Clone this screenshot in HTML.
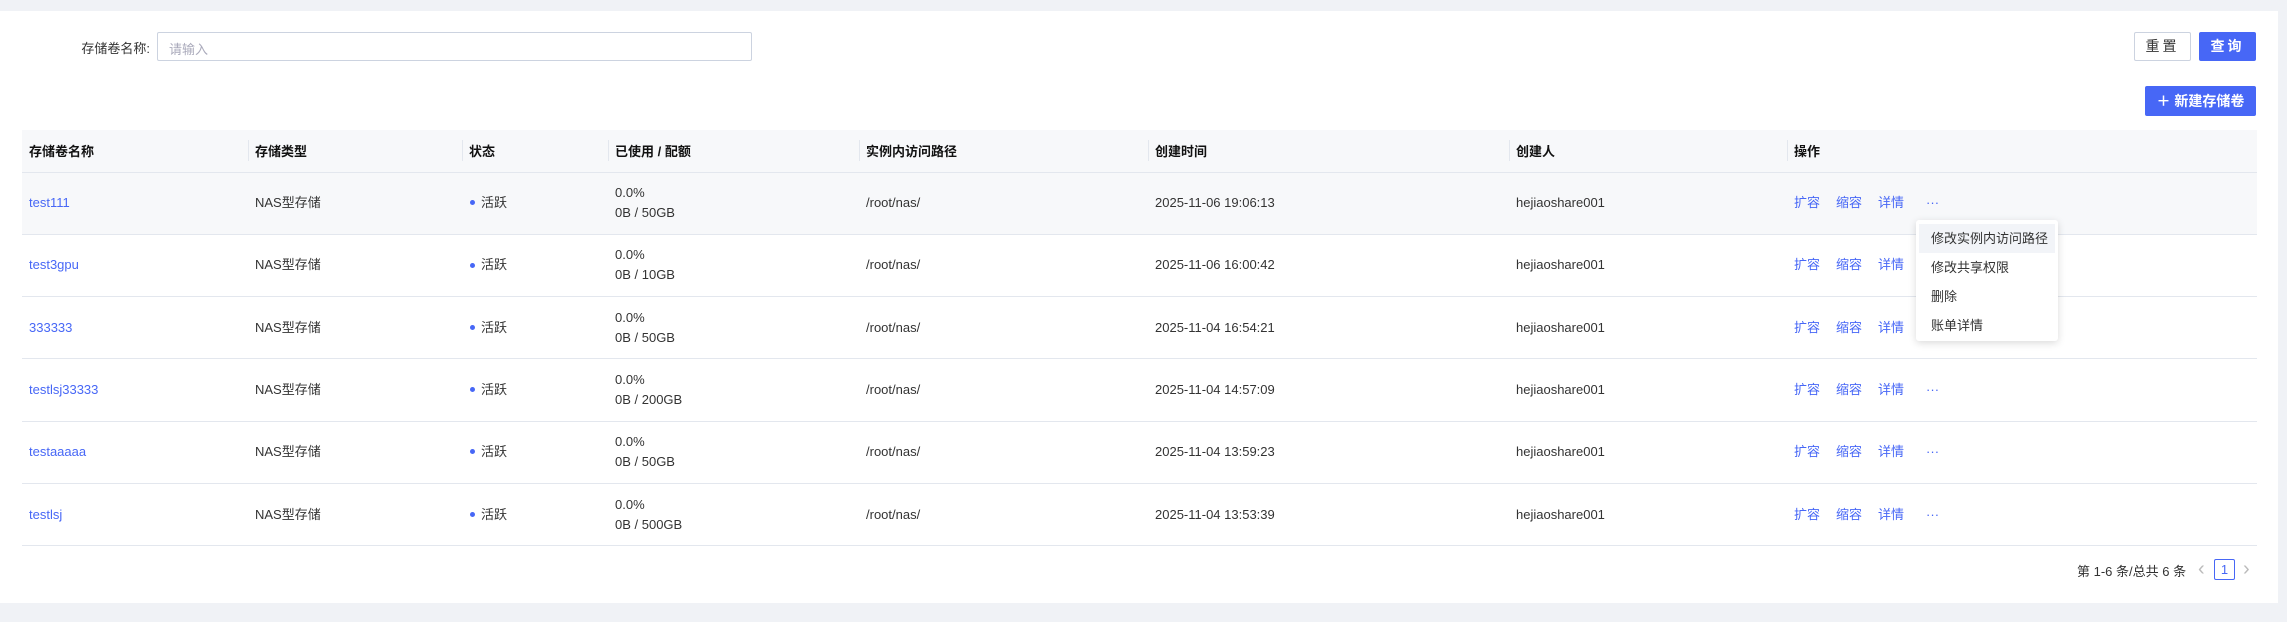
<!DOCTYPE html>
<html><head><meta charset="utf-8"><style>
*{box-sizing:border-box;margin:0;padding:0}
body{width:2287px;height:622px;background:#f0f2f6;font-family:"Liberation Sans","Noto Sans CJK SC",sans-serif;font-size:13px;color:#333;position:relative;overflow:hidden}
.card{position:absolute;left:0;top:11px;width:2278px;height:592px;background:#fff}
.abs{position:absolute}
.lbl{left:80px;top:38px;font-size:13px;color:#333;width:70px;text-align:right}
.inp{left:157px;top:32px;width:595px;height:29px;border:1px solid #ccd3e0;border-radius:2px;font-size:13px;color:#aab;padding:6px 11px}
.btn{height:29px;border-radius:2px;font-size:14px;text-align:center;line-height:27px}
.reset{left:2134px;top:32px;width:57px;border:1px solid #ccd3e0;color:#333;letter-spacing:3px}
.query{left:2199px;top:32px;width:57px;background:#4767f6;color:#fff;border:1px solid #4767f6;letter-spacing:3px;font-weight:bold}
.newb{left:2145px;top:86px;width:111px;height:30px;background:#4767f6;color:#fff;font-weight:bold;line-height:30px}
table{position:absolute;left:22px;top:130px;width:2235px;border-collapse:collapse;table-layout:fixed}
th{height:42px;background:#f7f8fa;text-align:left;font-weight:bold;padding-left:7px;position:relative;border-bottom:1px solid #e3e7ee;color:#111}
th+th:before{content:"";position:absolute;left:0;top:10px;height:21px;border-left:1px solid #e3e7ee}
td{height:62.3px;padding-left:7px;border-bottom:1px solid #e3e7ee;line-height:20px}
tr.hl td{background:#f7f8fa}
.lk{color:#4767f6}
.dot{display:inline-block;width:5px;height:5px;border-radius:50%;background:#4767f6;margin:0 6px 2px 1px;vertical-align:middle}
.ops span{color:#4767f6;margin-right:16px}
.ops span:last-child{margin-left:6px}
.menu{left:1916px;top:220px;width:142px;height:121px;background:#fff;box-shadow:0 2px 8px rgba(0,0,0,.15);border-radius:3px;padding:4px 3px}
.menu div{height:29px;line-height:29px;padding-left:12px;font-size:13px;color:#333}
.menu div:first-child{background:#f2f4f8}
.pg{left:2077px;top:561px;font-size:13px}
.pbox{left:2214px;top:559px;width:21px;height:21px;border:1px solid #4767f6;color:#4767f6;text-align:center;line-height:19px;border-radius:2px}
.arr{color:#bbb;font-size:20px;top:558px}
</style></head><body>
<div class="card"></div>
<div class="abs lbl">存储卷名称:</div>
<div class="abs inp">请输入</div>
<div class="abs btn reset">重置</div>
<div class="abs btn query">查询</div>
<div class="abs btn newb">＋ 新建存储卷</div>
<table>
<colgroup><col style="width:226px"><col style="width:214px"><col style="width:146px"><col style="width:251px"><col style="width:289px"><col style="width:361px"><col style="width:278px"><col></colgroup>
<tr><th>存储卷名称</th><th>存储类型</th><th>状态</th><th>已使用 / 配额</th><th>实例内访问路径</th><th>创建时间</th><th>创建人</th><th>操作</th></tr>
<tr class="hl"><td class="lk">test111</td><td>NAS型存储</td><td><i class="dot"></i>活跃</td><td>0.0%<br>0B / 50GB</td><td>/root/nas/</td><td>2025-11-06 19:06:13</td><td>hejiaoshare001</td><td class="ops"><span>扩容</span><span>缩容</span><span>详情</span><span>···</span></td></tr>
<tr><td class="lk">test3gpu</td><td>NAS型存储</td><td><i class="dot"></i>活跃</td><td>0.0%<br>0B / 10GB</td><td>/root/nas/</td><td>2025-11-06 16:00:42</td><td>hejiaoshare001</td><td class="ops"><span>扩容</span><span>缩容</span><span>详情</span><span>···</span></td></tr>
<tr><td class="lk">333333</td><td>NAS型存储</td><td><i class="dot"></i>活跃</td><td>0.0%<br>0B / 50GB</td><td>/root/nas/</td><td>2025-11-04 16:54:21</td><td>hejiaoshare001</td><td class="ops"><span>扩容</span><span>缩容</span><span>详情</span><span>···</span></td></tr>
<tr><td class="lk">testlsj33333</td><td>NAS型存储</td><td><i class="dot"></i>活跃</td><td>0.0%<br>0B / 200GB</td><td>/root/nas/</td><td>2025-11-04 14:57:09</td><td>hejiaoshare001</td><td class="ops"><span>扩容</span><span>缩容</span><span>详情</span><span>···</span></td></tr>
<tr><td class="lk">testaaaaa</td><td>NAS型存储</td><td><i class="dot"></i>活跃</td><td>0.0%<br>0B / 50GB</td><td>/root/nas/</td><td>2025-11-04 13:59:23</td><td>hejiaoshare001</td><td class="ops"><span>扩容</span><span>缩容</span><span>详情</span><span>···</span></td></tr>
<tr><td class="lk">testlsj</td><td>NAS型存储</td><td><i class="dot"></i>活跃</td><td>0.0%<br>0B / 500GB</td><td>/root/nas/</td><td>2025-11-04 13:53:39</td><td>hejiaoshare001</td><td class="ops"><span>扩容</span><span>缩容</span><span>详情</span><span>···</span></td></tr>
</table>
<div class="abs menu"><div>修改实例内访问路径</div><div>修改共享权限</div><div>删除</div><div>账单详情</div></div>
<div class="abs pg">第 1-6 条/总共 6 条</div>
<div class="abs arr" style="left:2198px">‹</div>
<div class="abs pbox">1</div>
<div class="abs arr" style="left:2243px">›</div>
</body></html>
